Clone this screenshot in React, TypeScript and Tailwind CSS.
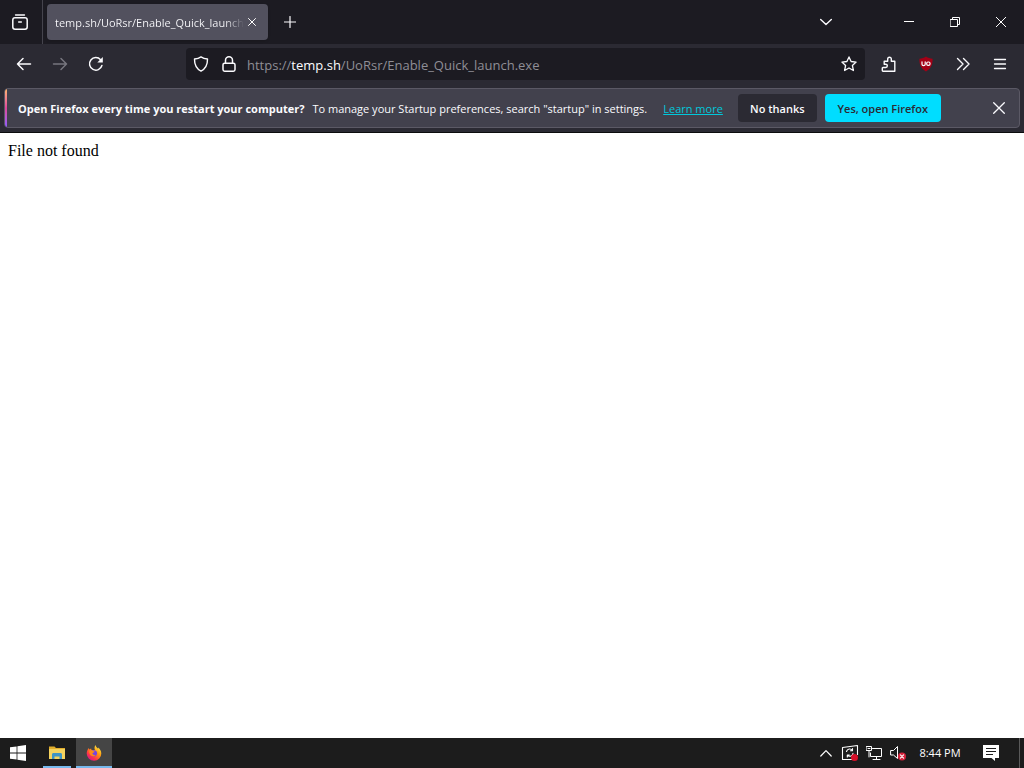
import React, { useState } from "react";

type IconProps = { className?: string; children: React.ReactNode; box?: number };

function Icon({ className = "size-4", children, box = 16 }: IconProps) {
  return (
    <svg
      viewBox={`0 0 ${box} ${box}`}
      className={`shrink-0 ${className}`}
      fill="none"
      stroke="currentColor"
      strokeWidth="1.3"
      strokeLinecap="round"
      strokeLinejoin="round"
      aria-hidden="true"
    >
      {children}
    </svg>
  );
}

type BarButtonProps = { label: string; disabled?: boolean; children: React.ReactNode };

function ToolButton({ label, disabled, children }: BarButtonProps) {
  return (
    <button
      type="button"
      aria-label={label}
      disabled={disabled}
      className="flex h-8 w-9 shrink-0 items-center justify-center rounded text-[#fbfbfe] hover:bg-white/10 disabled:text-[#77767f] disabled:hover:bg-transparent"
    >
      {children}
    </button>
  );
}

function WindowButton({ label, children }: BarButtonProps) {
  return (
    <button
      type="button"
      aria-label={label}
      className="flex h-full w-[46px] items-center justify-center text-white hover:bg-white/10"
    >
      {children}
    </button>
  );
}

function TabStrip() {
  return (
    <div className="flex h-11 items-center bg-[#1c1b22]">
      <button
        type="button"
        aria-label="Firefox View"
        className="flex h-full w-[43px] shrink-0 items-center justify-center border-r border-[#45444d] pr-0.5 text-[#fbfbfe]"
      >
        <Icon>
          <path d="M3.5 1h9" />
          <rect x=".8" y="3.7" width="14.4" height="11.5" rx="2.2" strokeWidth="1.5" />
          <path d="M6.7 8h2.6" strokeWidth="1.5" />
        </Icon>
      </button>
      <div className="ml-1 flex h-9 w-[221px] shrink-0 items-center rounded bg-[#52515e] px-2 shadow">
        <span className="min-w-0 flex-1 overflow-hidden bg-gradient-to-r from-[#fbfbfe] from-90% to-transparent bg-clip-text pt-px text-[11px] leading-4 whitespace-nowrap text-transparent">
          temp.sh/UoRsr/Enable_Quick_launch.exe
        </span>
        <button type="button" aria-label="Close tab" className="flex h-6 w-4 shrink-0 items-center justify-center text-white">
          <Icon className="size-2" box={8}>
            <path d="M.5.5l7 7M7.5.5l-7 7" strokeWidth="1" />
          </Icon>
        </button>
      </div>
      <div className="ml-1">
        <ToolButton label="Open a new tab">
          <Icon className="size-3" box={12}>
            <path d="M6 .5v11M.5 6h11" strokeWidth="1.2" />
          </Icon>
        </ToolButton>
      </div>
      <div className="ml-auto flex h-full items-center">
        <ToolButton label="List all tabs">
          <Icon className="size-3" box={12}>
            <path d="M.7 3.5L6 8.5l5.3-5" strokeWidth="1.4" />
          </Icon>
        </ToolButton>
        <div className="ml-[42px] flex h-full">
          <WindowButton label="Minimize">
            <Icon className="size-[10px]" box={10}>
              <path d="M0 4.5h10" strokeWidth="1" strokeLinecap="butt" />
            </Icon>
          </WindowButton>
          <WindowButton label="Restore">
            <Icon className="size-[10px]" box={10}>
              <path d="M.5 2.5h7v7h-7zM2.5 2.5v-2h7v7h-2" strokeWidth="1" strokeLinejoin="miter" />
            </Icon>
          </WindowButton>
          <WindowButton label="Close">
            <Icon className="size-[10px]" box={10}>
              <path d="M0 0l10 10M10 0L0 10" strokeWidth="1" />
            </Icon>
          </WindowButton>
        </div>
      </div>
    </div>
  );
}

function AddressBar() {
  const [url, setUrl] = useState("https://temp.sh/UoRsr/Enable_Quick_launch.exe");
  const parts = /^(\w+:\/\/)?([^/]*)(.*)$/.exec(url);
  return (
    <div className="ml-[72px] mr-1.5 flex h-8 min-w-0 flex-1 items-center rounded bg-[#1c1b22] pl-[7px] pr-2 text-[#fbfbfe]">
      <button type="button" aria-label="Tracking protection">
        <Icon>
          <path d="M8 .9c2 1.5 4.3 2 6.5 2.1.1 5.5-1.7 9.6-6.5 12.1C3.2 12.6 1.4 8.5 1.5 3 3.7 2.9 6 2.4 8 .9z" strokeWidth="1.4" />
        </Icon>
      </button>
      <button type="button" aria-label="Site information" className="ml-3">
        <Icon>
          <rect x="2" y="7.2" width="12" height="8" rx="1.6" strokeWidth="1.5" />
          <path d="M4.5 7V4.3a3.5 3.5 0 0 1 7 0V7" strokeWidth="1.5" />
        </Icon>
      </button>
      <div className="ml-2.5 grid min-w-0 flex-1 pt-0.5 text-[13px] leading-5">
        <span aria-hidden="true" className="col-start-1 row-start-1 overflow-hidden whitespace-pre text-[#8f8e96]">
          {parts?.[1]}
          <span className="text-[#fbfbfe]">{parts?.[2]}</span>
          {parts?.[3]}
        </span>
        <input
          aria-label="Search or enter address"
          value={url}
          onChange={(e) => setUrl(e.target.value)}
          spellCheck={false}
          className="col-start-1 row-start-1 min-w-0 bg-transparent text-transparent caret-white outline-none"
        />
      </div>
      <button type="button" aria-label="Bookmark this page">
        <Icon>
          <path d="M8 .9l2.1 4.6 5 .6-3.7 3.4 1 5L8 12l-4.4 2.5 1-5L.9 6.1l5-.6z" />
        </Icon>
      </button>
    </div>
  );
}

function NavBar() {
  return (
    <div className="flex h-11 items-center px-1.5 pb-1">
      <ToolButton label="Go back">
        <Icon>
          <path d="M1.5 8h13M7 2.5L1.5 8 7 13.5" strokeWidth="1.5" />
        </Icon>
      </ToolButton>
      <ToolButton label="Go forward" disabled>
        <Icon>
          <path d="M1.5 8h13M9 2.5L14.5 8 9 13.5" strokeWidth="1.5" />
        </Icon>
      </ToolButton>
      <ToolButton label="Reload">
        <Icon>
          <path d="M13.9 9.5A6.3 6.3 0 1 1 12.6 3.7" strokeWidth="1.5" />
          <path d="M14.8 1v5.5H9.3z" fill="currentColor" stroke="none" />
        </Icon>
      </ToolButton>
      <AddressBar />
      <div className="flex gap-px">
        <ToolButton label="Extensions">
          <Icon>
            <path d="M3.2 15.2h10.6V5.2H10.3V3a1.8 1.8 0 0 0-3.6 0v2.2H3.2v3h1.5a1.6 1.6 0 0 1 0 3.3H2c-.5 0-.7.3-.7.7v2.3c0 .5.3.7.7.7z" strokeWidth="1.4" />
          </Icon>
        </ToolButton>
        <ToolButton label="uBlock Origin">
          <Icon>
            <path d="M8 .6c2 1.4 4 2 6.6 2.1.1 6-1.6 10-6.6 12.7C3 12.7 1.3 8.7 1.4 2.7 4 2.6 6 2 8 .6z" fill="#a40016" stroke="none" />
            <path d="M4 5.8v2.4c0 1.8 3.2 1.8 3.2 0V5.8" strokeWidth="1.2" />
            <rect x="8.7" y="6" width="3.3" height="3.4" rx="1.3" strokeWidth="1.2" />
          </Icon>
        </ToolButton>
        <ToolButton label="More tools">
          <Icon>
            <path d="M2.5 2.5L8 8l-5.5 5.5M8.5 2.5L14 8l-5.5 5.5" strokeWidth="1.4" />
          </Icon>
        </ToolButton>
        <ToolButton label="Open application menu">
          <Icon>
            <path d="M2.5 3.5h11M2.5 8h11M2.5 12.5h11" />
          </Icon>
        </ToolButton>
      </div>
    </div>
  );
}

function StartupNotice() {
  return (
    <div
      role="alert"
      className="mx-1 flex h-10 items-stretch overflow-hidden rounded border border-[#5b5965] bg-[#42414d] text-[11px] leading-4 text-[#fbfbfe]"
    >
      <div className="w-0.5 shrink-0 bg-gradient-to-b from-[#ffb36b] via-[#e0459b] to-[#9059ff]" />
      <div className="ml-[11px] flex min-w-0 items-center gap-2 pt-px whitespace-nowrap">
        <strong className="font-bold">Open Firefox every time you restart your computer?</strong>
        <span>To manage your Startup preferences, search "startup" in settings.</span>
        <a href="#learn-more" className="ml-2 text-[#00c8dc] underline">
          Learn more
        </a>
      </div>
      <div className="ml-[15px] flex shrink-0 items-center gap-2">
        <button type="button" className="h-7 w-[79px] rounded bg-[#2b2a33] pt-px font-semibold">
          No thanks
        </button>
        <button type="button" className="h-7 w-[116px] rounded bg-[#00ddff] pt-px font-semibold text-[#2b2a33]">
          Yes, open Firefox
        </button>
      </div>
      <button type="button" aria-label="Close this message" className="mr-1 ml-auto flex w-8 shrink-0 items-center justify-center">
        <Icon className="size-3" box={12}>
          <path d="M.7.7l10.6 10.6M11.3.7L.7 11.3" />
        </Icon>
      </button>
    </div>
  );
}

function Taskbar() {
  return (
    <footer className="flex h-[30px] items-stretch bg-[#1c1c1c] text-white">
      <button type="button" aria-label="Start" className="flex w-9 items-center justify-center">
        <Icon>
          <path d="M0 2.3l6.6-.9v6.2H0zM7.4 1.3L16 0v7.6H7.4zM0 8.4h6.6v6.2L0 13.7zM7.4 8.4H16V16l-8.6-1.3z" fill="currentColor" stroke="none" />
        </Icon>
      </button>
      <button type="button" aria-label="File Explorer" className="ml-[3px] mr-px flex w-9 items-center justify-center px-1">
        <span className="flex h-full w-7 items-center justify-center border-b-2 border-[#76b9ed] pt-0.5">
          <Icon>
            <g stroke="none">
              <path d="M0 1.5h5.5L7 3h9v3H0z" fill="#e0ad2c" />
              <path d="M0 4h16v10H0z" fill="#f5d35e" />
              <path d="M3 14V9.5C3 8.5 3.7 8 4.5 8h7c.8 0 1.5.5 1.5 1.5V14h-2.5v-2.500h-5V14z" fill="#3f94c4" />
            </g>
          </Icon>
        </span>
      </button>
      <button
        type="button"
        aria-label="Firefox"
        className="flex w-9 items-center justify-center border-b-2 border-[#76b9ed] bg-[#454545] pt-0.5"
      >
        <Icon box={18}>
          <defs>
            <linearGradient id="flame" x1="0.85" y1="0.05" x2="0.2" y2="0.95">
              <stop offset="0" stopColor="#fff04a" />
              <stop offset="0.4" stopColor="#ff980e" />
              <stop offset="0.75" stopColor="#ff3647" />
              <stop offset="1" stopColor="#d9158b" />
            </linearGradient>
          </defs>
          <g stroke="none">
            <path d="M10.7 0c.3 2.3 1.9 3.2 3 4.3-.1-.9 0-1.5 0-1.5 2.2 1.7 3.5 4.3 3.5 6.7A8.2 8.2 0 0 1 .8 9.7c0-2.6 1-4.8 2.5-6.3 0 .7.1 1.2.4 1.7C4.3 4.4 5 3.9 5.8 3.8c0 .8.2 1.4.6 1.9L10 5.5C9.3 3.7 9.4 1.6 10.7 0z" fill="url(#flame)" />
            <circle cx="8.9" cy="9.4" r="3.5" fill="#7542e5" />
            <path d="M3.5 6.5c1.8-.9 3-.8 4.2.2.9.2 1.9.2 1.9.8 0 .7-1.7.9-2.2 1.5-.3 1.8 1.4 2.9 3.5 1.9-1.5 2.4-5 2.2-6.3-.1-.8-1.3-1-2.7-1.1-4.3z" fill="#ff8a16" />
          </g>
        </Icon>
      </button>
      <div className="ml-auto flex items-center">
        <button type="button" aria-label="Show hidden icons" className="flex w-6 justify-center">
          <Icon className="size-3" box={12}>
            <path d="M.8 9L6 3.7 11.2 9" strokeWidth="1.2" />
          </Icon>
        </button>
        <button type="button" aria-label="Update status" className="flex w-6 justify-center">
          <Icon className="size-[18px]" box={18}>
            <path d="M11 15.5H1.5v-12L16.500 1.500v9" strokeWidth="1.1" />
            <path d="M5.5 7.500A3.300 3.300 0 0 1 11.500 6.500V4.500M11.500 6.800H9.500M12 9.200a3.300 3.300 0 0 1-5.500 2.100M6.300 13v-2h2" strokeWidth="1.1" />
            <circle cx="13.5" cy="13.5" r="3.5" fill="#d70f28" stroke="none" />
          </Icon>
        </button>
        <button type="button" aria-label="Network" className="flex w-6 justify-center">
          <Icon>
            <path d="M6.5 3.5h9v8h-11V8M10.5 11.5v3M7 14.5h7M.5 1.5h5v4h-5zM3 5.5v6.5M2 3.5h2" strokeWidth="1" strokeLinejoin="miter" />
          </Icon>
        </button>
        <button type="button" aria-label="Volume muted" className="flex w-6 justify-center">
          <Icon>
            <path d="M1 5.5h2.5L7.5 1.5v12L3.5 10H1z" strokeWidth="1" />
            <circle cx="12" cy="11.5" r="4" fill="#d4223b" stroke="none" />
            <path d="M10.4 9.9l3.2 3.2M13.6 9.9l-3.2 3.2" strokeWidth="1.1" />
          </Icon>
        </button>
        <button type="button" className="ml-[3px] w-[54px] text-center text-[11px] leading-4 whitespace-nowrap">
          8:44 PM
        </button>
        <button type="button" aria-label="Notifications" className="flex w-12 justify-center">
          <Icon>
            <path d="M0 0h16v13h-4v3l-3.5-3H0z" fill="currentColor" stroke="none" />
            <path d="M3 3.5h10M3 6.5h10M3 9.5h7" stroke="#1c1c1c" strokeWidth="1" strokeLinecap="butt" />
          </Icon>
        </button>
        <button type="button" aria-label="Show desktop" className="ml-1 h-[30px] w-[5px] border-l border-[#5a5a5a]" />
      </div>
    </footer>
  );
}

export default function App() {
  return (
    <div className="flex min-h-screen flex-col bg-white font-['Open_Sans','Noto_Sans',sans-serif]">
      <header className="border-b border-[#0c0c0d] bg-[#2b2a33] pb-1">
        <TabStrip />
        <NavBar />
        <StartupNotice />
      </header>
      <main className="flex-1 bg-white p-2 font-['Liberation_Serif',serif] text-base leading-5 text-black">
        File not found
      </main>
      <Taskbar />
    </div>
  );
}
